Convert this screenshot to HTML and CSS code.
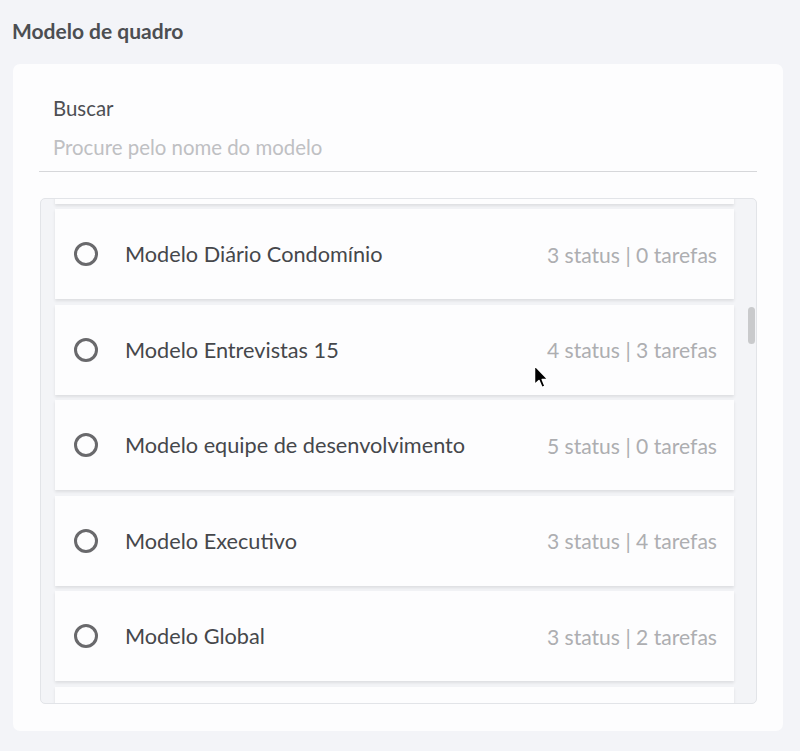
FILE: index.html
```html
<!DOCTYPE html>
<html lang="pt">
<head>
<meta charset="utf-8">
<link rel="stylesheet" href="styles.css">
</head>
<body>
<h2 class="title">Modelo de quadro</h2>
<section class="card">
  <div class="field">
    <label class="field-label">Buscar</label>
    <div class="field-input">Procure pelo nome do modelo</div>
  </div>
  <div class="list">
    <div class="list-inner">
      <div class="item">
        <span class="radio"></span><span class="name">Modelo Conselho</span><span class="meta">3 status | 1 tarefas</span>
      </div>
      <div class="item">
        <span class="radio"></span><span class="name">Modelo Diário Condomínio</span><span class="meta">3 status | 0 tarefas</span>
      </div>
      <div class="item">
        <span class="radio"></span><span class="name">Modelo Entrevistas 15</span><span class="meta">4 status | 3 tarefas</span>
      </div>
      <div class="item">
        <span class="radio"></span><span class="name">Modelo equipe de desenvolvimento</span><span class="meta">5 status | 0 tarefas</span>
      </div>
      <div class="item">
        <span class="radio"></span><span class="name">Modelo Executivo</span><span class="meta">3 status | 4 tarefas</span>
      </div>
      <div class="item">
        <span class="radio"></span><span class="name">Modelo Global</span><span class="meta">3 status | 2 tarefas</span>
      </div>
      <div class="item">
        <span class="radio"></span><span class="name">Modelo Kanban</span><span class="meta">3 status | 0 tarefas</span>
      </div>
    </div>
    <div class="scroll-thumb"></div>
  </div>
</section>
<svg class="cursor" width="20" height="28" viewBox="0 0 20 28">
  <path d="M1.5 1.5 L1.5 20.5 L6 16.5 L9 23.5 L12 22.2 L9.2 15.5 L15 15.5 Z" fill="#000" stroke="#fff" stroke-width="1.5" stroke-linejoin="round"/>
</svg>
</body>
</html>
```
FILE: styles.css
```css
html, body {
  margin: 0;
  padding: 0;
}
body {
  background: #f3f4f8;
  font-family: "Lato", "Noto Sans", sans-serif;
  width: 800px;
  height: 751px;
  overflow: hidden;
  position: relative;
}
.title {
  margin: 0;
  padding: 19px 0 0 12px;
  height: 64px;
  box-sizing: border-box;
  font-size: 21px;
  font-weight: 700;
  color: #4c4e52;
  line-height: 24px;
}
.card {
  margin-left: 13px;
  width: 770px;
  height: 667px;
  box-sizing: border-box;
  background: #fdfdfe;
  border-radius: 7px;
  padding: 28px 26px 27px 26px;
}
.field {
  border-bottom: 1.5px solid #d6d7da;
  padding: 3px 14px 0 14px;
  height: 80px;
  box-sizing: border-box;
}
.field-label {
  display: block;
  font-size: 20.4px;
  color: #4d4f53;
  line-height: 26px;
  height: 26px;
}
.field-input {
  margin-top: 13px;
  font-size: 20.4px;
  color: #bfc0c3;
  line-height: 26px;
}
.list {
  position: relative;
  margin-top: 26px;
  margin-left: 1px;
  height: 506px;
  box-sizing: border-box;
  border: 1px solid #e2e4e8;
  border-radius: 5px;
  background: #f3f4f7;
  overflow: hidden;
}
.list-inner {
  margin: -85.5px 22px 0 14px;
}
.item {
  display: flex;
  align-items: center;
  height: 90px;
  margin-bottom: 5.5px;
  background: #fdfdfe;
  box-shadow: 0 2px 3px rgba(0, 0, 0, 0.09);
  padding: 0 17px 0 19px;
}
.radio {
  flex: none;
  width: 24px;
  height: 24px;
  box-sizing: border-box;
  border: 3px solid #69696c;
  border-radius: 50%;
  margin-right: 27px;
}
.name {
  flex: 1;
  font-size: 21.7px;
  color: #45474b;
}
.meta {
  font-size: 21.1px;
  color: #adaeb1;
}
.scroll-thumb {
  position: absolute;
  left: 707px;
  top: 108px;
  width: 7px;
  height: 37px;
  border-radius: 4px;
  background: #c9cacc;
}
.cursor {
  position: absolute;
  left: 533px;
  top: 364px;
}
```
